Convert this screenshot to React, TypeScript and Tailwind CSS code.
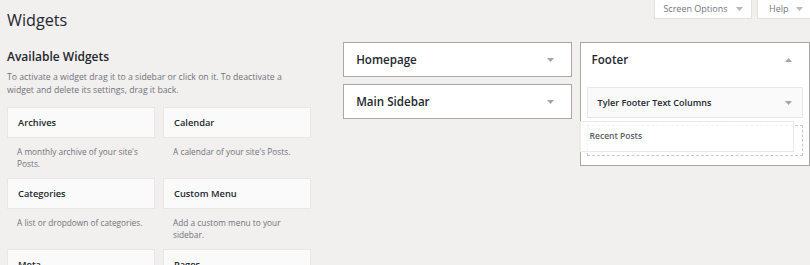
import React from 'react';

interface Widget {
  title: string;
  description: string;
}

const widgets: Widget[] = [
  { title: 'Archives', description: "A monthly archive of your site's Posts." },
  { title: 'Calendar', description: "A calendar of your site's Posts." },
  { title: 'Categories', description: 'A list or dropdown of categories.' },
  { title: 'Custom Menu', description: 'Add a custom menu to your sidebar.' },
  { title: 'Meta', description: 'Login, RSS, & WordPress.org links.' },
  { title: 'Pages', description: "A list of your site's Pages." },
];

const Arrow: React.FC<{ up?: boolean; className?: string }> = ({ up, className }) => (
  <svg width="7" height="4" viewBox="0 0 7 4" className={className}>
    {up ? <path d="M0 4 L3.5 0 L7 4 Z" fill="currentColor" /> : <path d="M0 0 L7 0 L3.5 4 Z" fill="currentColor" />}
  </svg>
);

const WidgetCard: React.FC<{ widget: Widget }> = ({ widget }) => (
  <div className="h-[71px]">
    <div className="h-[31px] bg-[#fafafa] border border-[#e8e6e6] flex items-center px-[10px] text-[9.3px] font-semibold text-[#23282d]">
      {widget.title}
    </div>
    <p className="pt-[8px] px-[10px] text-[8.3px] leading-[12px] text-[#6f7479]">{widget.description}</p>
  </div>
);

const SidebarBox: React.FC<{ name: string }> = ({ name }) => (
  <div className="h-[35px] bg-white border border-[#a7a7a7] flex items-center justify-between pl-[12px] pr-[17px]">
    <span className="text-[11.6px] font-semibold text-[#23282d]">{name}</span>
    <Arrow className="text-[#a0a5aa]" />
  </div>
);

export default function App() {
  return (
    <div className="relative w-[810px] h-[265px] overflow-hidden bg-[#f2efef] font-['Open_Sans',sans-serif]">
      <div className="absolute top-0 right-0 flex gap-[5px]">
        <button className="w-[98px] h-[19px] bg-white border border-t-0 border-[#e2e0e0] flex items-center justify-center gap-[8px] text-[9px] text-[#72777c]">
          Screen Options <Arrow className="text-[#b4b9be]" />
        </button>
        <button className="w-[53px] h-[19px] bg-white border border-t-0 border-r-0 border-[#e2e0e0] flex items-center gap-[8px] pl-[11px] text-[9px] text-[#72777c]">
          Help <Arrow className="text-[#b4b9be]" />
        </button>
      </div>

      <h1 className="pl-[7px] pt-[8px] text-[16.2px] leading-[24px] text-[#23282d]">Widgets</h1>

      <div className="flex">
        <div className="w-[344px] pl-[7px]">
          <h2 className="mt-[16px] text-[12px] leading-[18px] font-semibold text-[#23282d]">Available Widgets</h2>
          <p className="mt-[5px] w-[300px] text-[8.7px] leading-[13px] text-[#6f7479]">
            To activate a widget drag it to a sidebar or click on it. To deactivate a widget and delete its settings, drag it back.
          </p>
          <div className="mt-[10px] grid grid-cols-[148px_148px] gap-x-[8px]">
            {widgets.map((w) => (
              <WidgetCard key={w.title} widget={w} />
            ))}
          </div>
        </div>

        <div className="w-[229px] mt-[10px] flex flex-col gap-[7px]">
          <SidebarBox name="Homepage" />
          <SidebarBox name="Main Sidebar" />
        </div>

        <div className="relative ml-[8px] mt-[10px] w-[231px] h-[124px] bg-white border border-[#a7a7a7] self-start">
          <div className="h-[34px] flex items-center justify-between pl-[11px] pr-[17px]">
            <span className="text-[11.6px] font-semibold text-[#23282d]">Footer</span>
            <Arrow up className="text-[#a0a5aa]" />
          </div>
          <div className="mt-[10px] mx-[6px] flex flex-col gap-[7px]">
            <div className="h-[31px] bg-[#fafafa] border border-[#e8e6e6] flex items-center justify-between pl-[10px] pr-[10px]">
              <span className="text-[9px] font-semibold text-[#23282d]">Tyler Footer Text Columns</span>
              <Arrow className="text-[#a0a5aa]" />
            </div>
            <div className="h-[31px] border border-dashed border-[#c8c8c8]" />
          </div>
          <div className="absolute left-[-2px] top-[78px] w-[215px] h-[31px] bg-white/80 border border-[#ebe9e9] flex items-center pl-[10px]">
            <span className="text-[8.5px] font-semibold text-[#555d66]">Recent Posts</span>
          </div>
        </div>
      </div>
    </div>
  );
}
